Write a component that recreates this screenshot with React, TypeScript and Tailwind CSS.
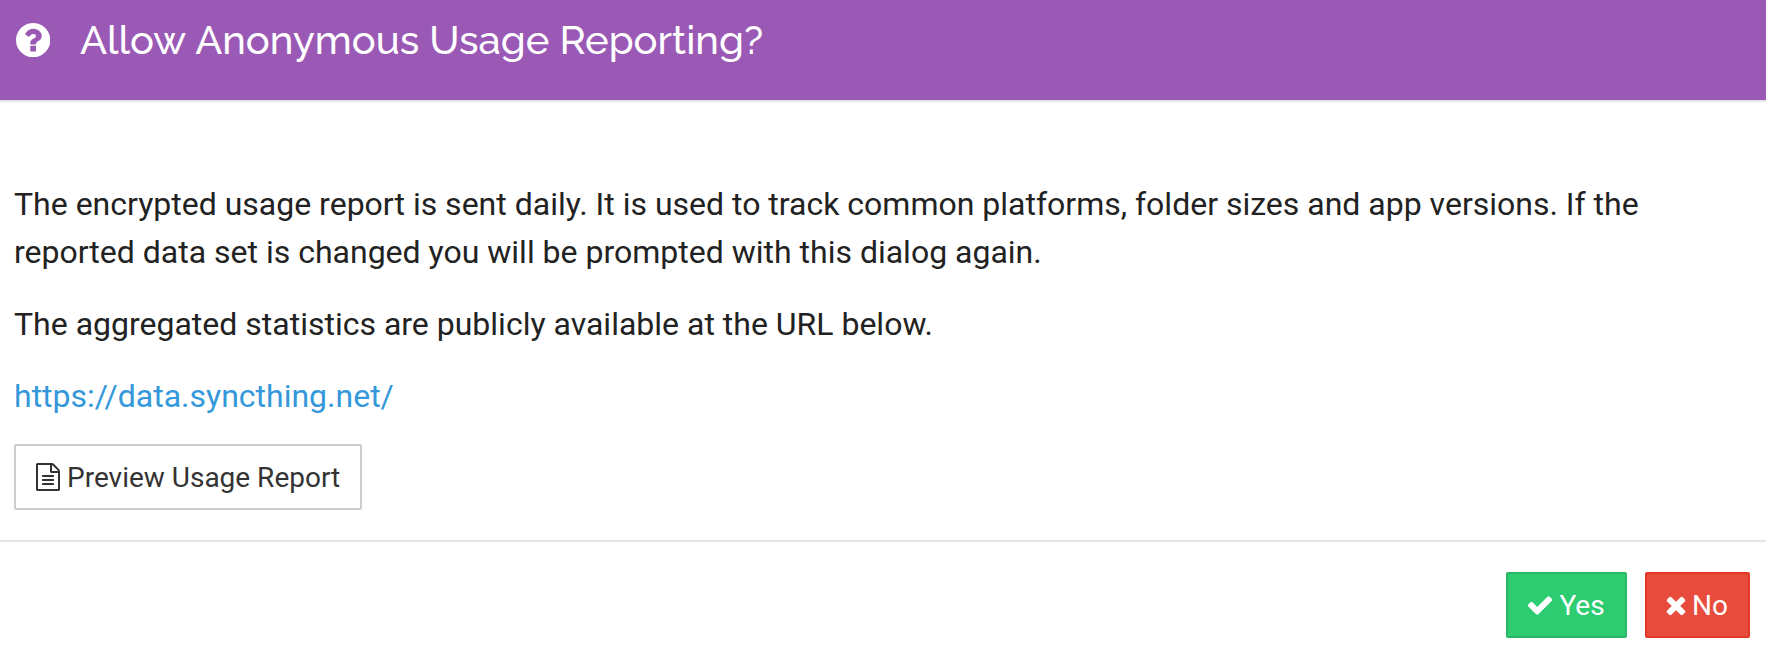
import type { ReactNode } from "react";

type GlyphProps = { viewBox: string; className: string; d: string };

function Glyph({ viewBox, className, d }: GlyphProps) {
  return (
    <svg viewBox={viewBox} className={className} fill="currentColor" aria-hidden="true">
      <path d={d} />
    </svg>
  );
}

const QUESTION =
  "M896 1248v-192q0-14-9-23t-23-9H672q-14 0-23 9t-9 23v192q0 14 9 23t23 9h192q14 0 23-9t9-23zm256-672q0-88-55.500-163t-138.500-116-170-41q-243 0-371 213-15 24 8 42l132 100q7 6 19 6 16 0 25-12 53-68 86-92 34-24 86-24 48 0 85.500 26t37.500 59q0 38-20 61t-68 45q-63 28-115.500 86.500t-52.500 125.500v36q0 14 9 23t23 9h192q14 0 23-9t9-23q0-19 21.500-49.500t54.500-49.500q32-18 49-28.500t46-35 44.500-48 28-60.500 12.500-81zm384 192q0 209-103 385.500t-279.500 279.500-385.500 103-385.500-103-279.500-279.500-103-385.500 103-385.500 279.500-279.500 385.500-103 385.500 103 279.500 279.500 103 385.500z";
const FILE =
  "M1596 380q28 28 48 76t20 88v1152q0 40-28 68t-68 28h-1344q-40 0-68-28t-28-68v-1600q0-40 28-68t68-28h896q40 0 88 20t76 48zm-444-244v376h376q-10-29-22-41l-313-313q-12-12-41-22zm384 1528v-1024h-416q-40 0-68-28t-28-68v-416h-768v1536h1280zm-1024-864q0-14 9-23t23-9h704q14 0 23 9t9 23v64q0 14-9 23t-23 9h-704q-14 0-23-9t-9-23v-64zm736 224q14 0 23 9t9 23v64q0 14-9 23t-23 9h-704q-14 0-23-9t-9-23v-64q0-14 9-23t23-9h704zm0 256q14 0 23 9t9 23v64q0 14-9 23t-23 9h-704q-14 0-23-9t-9-23v-64q0-14 9-23t23-9h704z";
const CHECK =
  "M1671 566q0 40-28 68l-724 724-136 136q-28 28-68 28t-68-28l-136-136-362-362q-28-28-28-68t28-68l136-136q28-28 68-28t68 28l294 295 656-657q28-28 68-28t68 28l136 136q28 28 28 68z";
const TIMES =
  "M1490 1322q0 40-28 68l-136 136q-28 28-68 28t-68-28l-294-294-294 294q-28 28-68 28t-68-28l-136-136q-28-28-28-68t28-68l294-294-294-294q-28-28-28-68t28-68l136-136q28-28 68-28t68 28l294 294 294-294q28-28 68-28t68 28l136 136q28 28 28 68t-28 68l-294 294 294 294q28 28 28 68z";

function Button({ className, children }: { className: string; children: ReactNode }) {
  return (
    <button
      type="button"
      className={`flex h-[66px] items-start rounded-[2px] border-2 pt-3 text-[28px] leading-[40px] whitespace-nowrap ${className}`}
    >
      {children}
    </button>
  );
}

export default function App() {
  return (
    <div className="flex h-[651px] w-[1766px] flex-col overflow-hidden bg-white font-['Roboto',sans-serif] text-[#222]">
      <header className="flex h-[102px] shrink-0 items-start border-b-2 border-[#e5e5e5] bg-[#9b59b6] pt-[14px] pl-[16px] text-white">
        <Glyph viewBox="0 0 1536 1536" className="mt-[8.500px] h-[34.300px] w-[34.300px]" d={QUESTION} />
        <h1 className="ml-[29.700px] font-['Raleway','Lato',sans-serif] text-[40px] leading-[52px] font-medium">
          Allow <span className="ml-[0.100px]">Anonymous Usage Reporting?</span>
        </h1>
      </header>
      <main className="flex h-[438px] shrink-0 flex-col items-start px-[14px] pt-[78px] text-[32px] leading-[48px]">
        <p className="w-[1700px]">
          The encrypted usage report is sent daily. It is used to track common platforms, folder sizes and app
          versions. If the reported data set is changed you will be prompted with this dialog again.
        </p>
        <p className="mt-6">The aggregated statistics are publicly available at the URL below.</p>
        <p className="mt-6 text-[#3498db]">https://data.syncthing.net/</p>
        <Button className="mt-6 w-[348px] border-[#ccc] bg-white pl-[20px] text-[#333]">
          <Glyph viewBox="128 0 1536 1792" className="mt-[5px] h-7 w-6" d={FILE} />
          <span className="ml-[7px]">Preview Usage Report</span>
        </Button>
      </main>
      <footer className="flex grow items-start justify-end gap-[18px] border-t-2 border-[#e5e5e5] pt-[30px] pr-[16px] text-white">
        <Button className="w-[121px] border-[#29b765] bg-[#2ecc71] pl-[18px]">
          <Glyph viewBox="0 0 1792 1792" className="mt-[4.500px] h-7 w-7" d={CHECK} />
          <span className="ml-[5.400px]">Yes</span>
        </Button>
        <Button className="w-[105px] border-[#e43725] bg-[#e74c3c] pl-[18px]">
          <Glyph viewBox="192 0 1408 1792" className="mt-[4.500px] h-7 w-[22px]" d={TIMES} />
          <span className="ml-[5px]">No</span>
        </Button>
      </footer>
    </div>
  );
}
